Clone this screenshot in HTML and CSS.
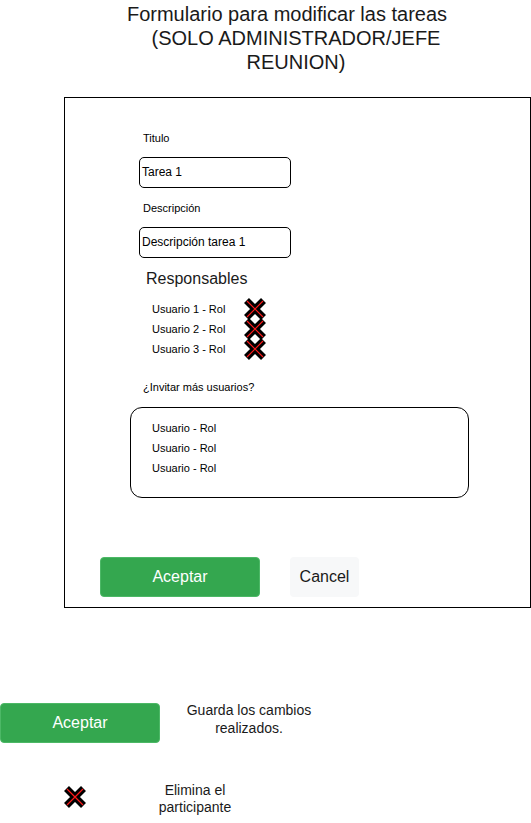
FILE: index.html
```html
<!DOCTYPE html>
<html lang="es">
<head>
<meta charset="utf-8">
<title>Formulario tareas</title>
<link rel="stylesheet" href="styles.css">
</head>
<body>
<div class="page">
  <h1 class="title"><span class="title-line">Formulario para modificar las tareas</span><span class="title-line title-line-shift">(SOLO ADMINISTRADOR/JEFE</span><span class="title-line title-line-shift">REUNION)</span></h1>

  <div class="frame">
    <div class="label label-first">Titulo</div>
    <div class="input">Tarea 1</div>
    <div class="label label-desc">Descripción</div>
    <div class="input">Descripción tarea 1</div>

    <div class="section">Responsables</div>
    <ul class="users">
      <li class="user"><span class="user-name">Usuario 1 - Rol</span>
        <svg class="xicon" width="22" height="22" viewBox="0 0 22 22"><path d="M2.5 2.5L19.5 19.5M19.5 2.5L2.5 19.5" stroke="#000" stroke-width="7"/><path d="M3 3L19 19M19 3L3 19" stroke="#ff1a1a" stroke-width="1.2"/></svg></li>
      <li class="user"><span class="user-name">Usuario 2 - Rol</span>
        <svg class="xicon" width="22" height="22" viewBox="0 0 22 22"><path d="M2.5 2.5L19.5 19.5M19.5 2.5L2.5 19.5" stroke="#000" stroke-width="7"/><path d="M3 3L19 19M19 3L3 19" stroke="#ff1a1a" stroke-width="1.2"/></svg></li>
      <li class="user"><span class="user-name">Usuario 3 - Rol</span>
        <svg class="xicon" width="22" height="22" viewBox="0 0 22 22"><path d="M2.5 2.5L19.5 19.5M19.5 2.5L2.5 19.5" stroke="#000" stroke-width="7"/><path d="M3 3L19 19M19 3L3 19" stroke="#ff1a1a" stroke-width="1.2"/></svg></li>
    </ul>

    <div class="label label-invite">¿Invitar más usuarios?</div>
    <ul class="invite-box">
      <li class="invite-item">Usuario - Rol</li>
      <li class="invite-item">Usuario - Rol</li>
      <li class="invite-item">Usuario - Rol</li>
    </ul>

    <div class="actions">
      <button class="btn btn-accept">Aceptar</button>
      <button class="btn btn-cancel">Cancel</button>
    </div>
  </div>

  <div class="legend legend-accept">
    <button class="btn btn-accept">Aceptar</button>
    <p class="legend-text legend-text-accept">Guarda los cambios realizados.</p>
  </div>

  <div class="legend legend-x">
    <svg class="xicon" width="22" height="22" viewBox="0 0 22 22"><path d="M2.5 2.5L19.5 19.5M19.5 2.5L2.5 19.5" stroke="#000" stroke-width="7"/><path d="M3 3L19 19M19 3L3 19" stroke="#ff1a1a" stroke-width="1.2"/></svg>
    <p class="legend-text legend-text-x">Elimina el participante</p>
  </div>
</div>
</body>
</html>
```

FILE: styles.css
```css
* { box-sizing: border-box; }

html, body {
  margin: 0;
  padding: 0;
  background: #ffffff;
}

body {
  font-family: "Liberation Sans", Arial, sans-serif;
  color: #000;
}

.page {
  width: 531px;
  position: relative;
}

.title {
  margin: 0;
  padding-top: 2px;
  width: 531px;
  padding-left: 43px;
  text-align: center;
  font-weight: normal;
  font-size: 20px;
  line-height: 24px;
  color: #1a1a1a;
}

.title-line {
  display: block;
  white-space: nowrap;
}

.title-line-shift {
  padding-left: 18px;
}

.frame {
  margin-top: 23px;
  margin-left: 64px;
  width: 467px;
  height: 511px;
  border: 1px solid #000;
  padding-top: 33px;
  padding-left: 74px;
}

.label {
  font-size: 11px;
  line-height: 14px;
  padding-left: 4px;
  color: #000;
}

.label-first { margin-bottom: 12px; }
.label-desc { margin-top: 13px; margin-bottom: 12px; }

.input {
  width: 152px;
  height: 31px;
  border: 1px solid #000;
  border-radius: 5px;
  font-size: 12px;
  line-height: 29px;
  padding-left: 2px;
  white-space: nowrap;
}

.section {
  margin-top: 10px;
  padding-left: 7px;
  font-size: 16px;
  line-height: 22px;
  color: #1a1a1a;
}

.users {
  list-style: none;
  margin: 9px 0 0 0;
  padding: 0 0 0 13px;
}

.user {
  display: flex;
  align-items: center;
  height: 20px;
  font-size: 11px;
}

.user-name {
  width: 92px;
  flex: none;
}

.xicon {
  display: block;
  flex: none;
}

.label-invite {
  margin-top: 21px;
}

.invite-box {
  list-style: none;
  margin: 13px 0 0 -9px;
  padding: 10px 0 0 21px;
  width: 339px;
  height: 91px;
  border: 1px solid #000;
  border-radius: 12px;
}

.invite-item {
  height: 20px;
  line-height: 20px;
  font-size: 11px;
}

.actions {
  display: flex;
  gap: 30px;
  margin-top: 59px;
  margin-left: -39px;
}

.btn {
  font-family: "Liberation Sans", Arial, sans-serif;
  font-size: 16px;
  height: 40px;
  border-radius: 4px;
  border: none;
  padding: 0;
  cursor: pointer;
}

.btn-accept {
  width: 160px;
  background: #34a74f;
  color: #fff;
  border: 1px solid #4cb866;
}

.btn-cancel {
  width: 69px;
  background: #f7f8f9;
  color: #1a1a1a;
}

.legend {
  display: flex;
}

.legend-accept {
  margin-top: 95px;
  align-items: flex-start;
}

.legend-text {
  margin: 0;
  text-align: center;
  font-size: 14px;
  color: #1a1a1a;
}

.legend-text-accept {
  width: 178px;
  line-height: 18px;
  margin-top: -2px;
}

.legend-x {
  margin-top: 37px;
  padding-left: 64px;
  align-items: flex-start;
}

.legend-x .xicon {
  margin-top: 6px;
}

.legend-text-x {
  width: 100px;
  margin-left: 59px;
  margin-top: 2px;
  line-height: 17px;
}
```
